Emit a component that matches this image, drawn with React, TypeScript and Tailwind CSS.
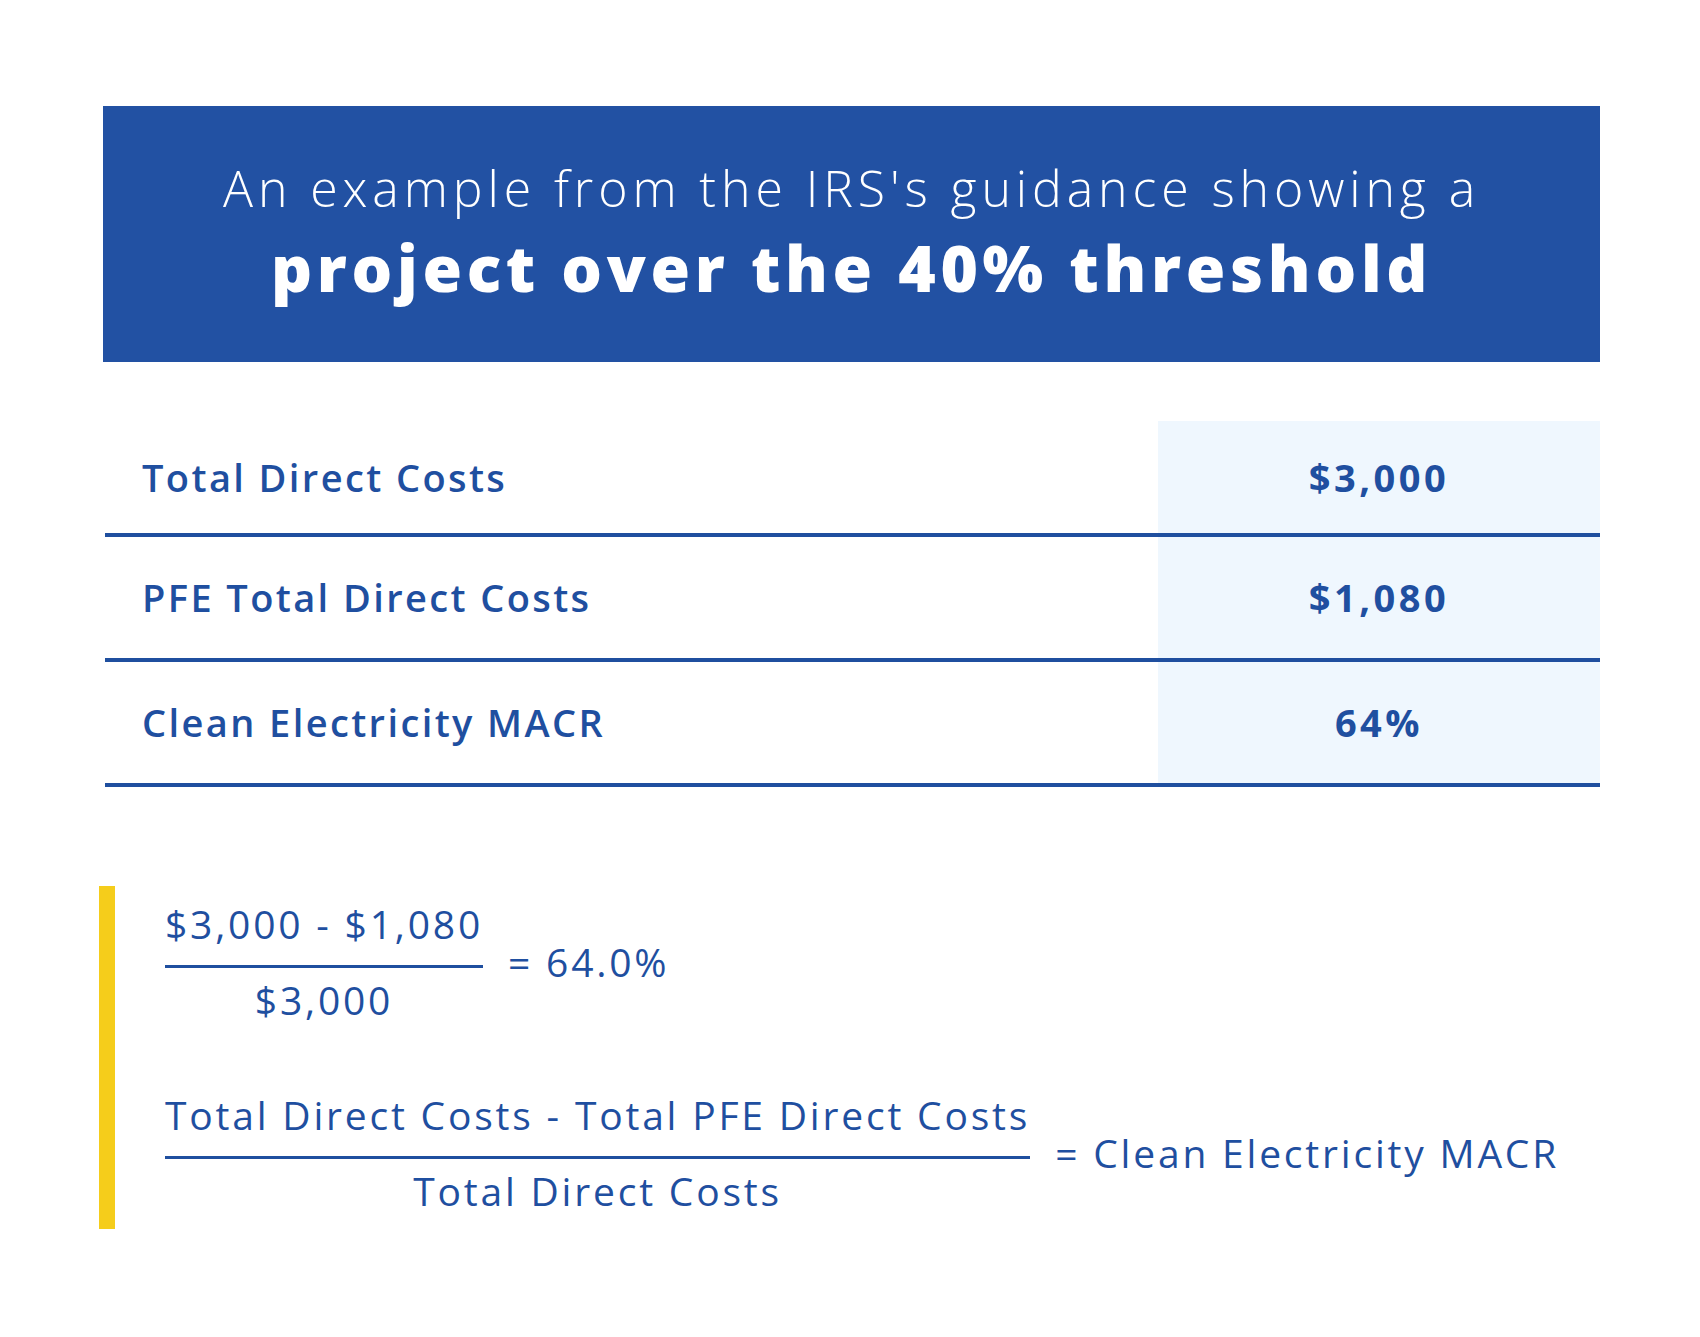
const rows = [
  { label: "Total Direct Costs", value: "$3,000", h: "h-[112px]" },
  { label: "PFE Total Direct Costs", value: "$1,080", h: "h-[121px]" },
  { label: "Clean Electricity MACR", value: "64%", h: "h-[121px]" },
];

function Fraction({ top, bottom, result }: { top: string; bottom: string; result: string }) {
  return (
    <div className="flex items-center">
      <div className="flex flex-col items-center">
        <div className="leading-[48px] whitespace-nowrap">{top}</div>
        <div className="mt-[17px] mb-[8px] h-[3px] w-full bg-[#1f4f9f]" />
        <div className="leading-[48px] whitespace-nowrap">{bottom}</div>
      </div>
      <div className="ml-[25px] leading-[48px] whitespace-nowrap">= {result}</div>
    </div>
  );
}

export default function App() {
  return (
    <div className="w-[1700px] h-[1337px] bg-white font-['Open_Sans',sans-serif] text-[#1f4fa0]">
      <div className="pt-[106px]">
        {/* Header */}
        <div className="ml-[103px] w-[1497px] h-[256px] bg-[#2251a3] pt-[52px] text-center text-white">
          <div className="text-[50px] leading-[60px] font-light tracking-[4.9px]">
            An example from the IRS's guidance showing a
          </div>
          <div className="mt-[10px] text-[64px] leading-[80px] font-extrabold tracking-[4.7px]">
            project over the 40% threshold
          </div>
        </div>

        {/* Table */}
        <div className="ml-[105px] w-[1495px] mt-[59px]">
          {rows.map((r) => (
            <div key={r.label} className="flex border-b-4 border-[#1f4f9f]">
              <div className={`flex-1 flex items-center pl-[37px] text-[38px] font-semibold tracking-[2.4px] ${r.h}`}>
                {r.label}
              </div>
              <div className={`w-[442px] flex items-center justify-center bg-[#eff7fe] text-[38px] font-bold tracking-[3.5px] ${r.h}`}>
                {r.value}
              </div>
            </div>
          ))}
        </div>

        {/* Formula */}
        <div className="ml-[99px] mt-[99px] flex border-l-[16px] border-[#f5cd1b] pl-[50px] py-[14px] text-[39px] tracking-[2.8px]">
          <div className="flex flex-col gap-[67px]">
            <Fraction top="$3,000 - $1,080" bottom="$3,000" result="64.0%" />
            <Fraction
              top="Total Direct Costs - Total PFE Direct Costs"
              bottom="Total Direct Costs"
              result="Clean Electricity MACR"
            />
          </div>
        </div>
      </div>
    </div>
  );
}
